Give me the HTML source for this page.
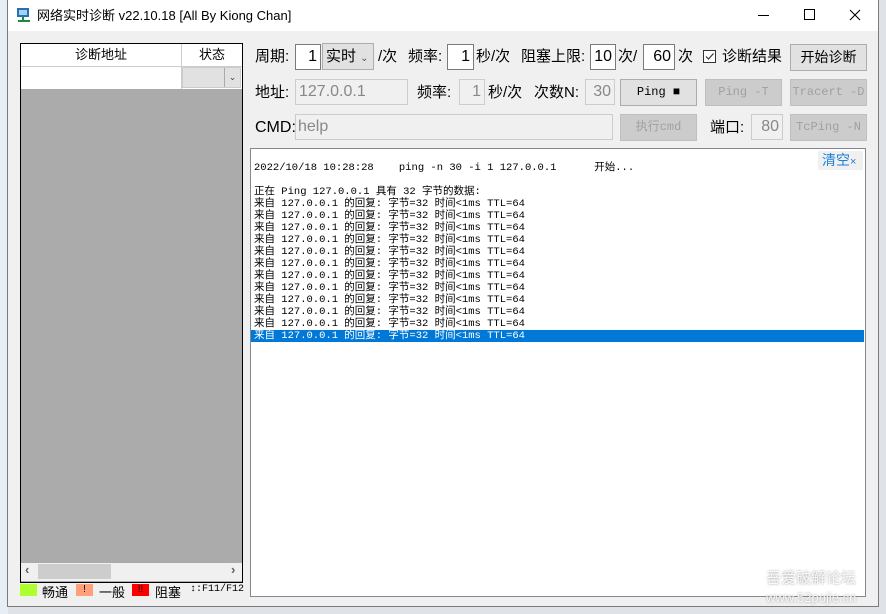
<!DOCTYPE html>
<html><head><meta charset="utf-8"><style>
*{box-sizing:border-box;margin:0;padding:0}
body{width:886px;height:614px;position:relative;overflow:hidden;background:#dfe3e8;font-family:"Liberation Sans","Microsoft YaHei","Noto Sans CJK SC",sans-serif;font-size:14px;color:#000}
.a{position:absolute}
#win{left:7px;top:0;width:872px;height:607px;background:#f0f0f0;border:1px solid #7a7a7a;border-top:none}
#title{left:8px;top:0;width:870px;height:31px;background:#fff}
.inp{position:absolute;background:#fff;border:1px solid #7a7a7a;text-align:right;padding-right:3px;font-size:16px;line-height:23px}
.dis{background:#f0f0f0;border-color:#ccc;color:#888}
.btn{position:absolute;background:#e1e1e1;border:1px solid #adadad;text-align:center;font-size:13px;line-height:24px}
.bd{background:#cccccc;border-color:#bfbfbf;color:#a0a0a0;font-family:"Liberation Mono",monospace;font-size:12px}
.lab{position:absolute;font-size:15px;line-height:20px}
#out{left:250px;top:148px;width:616px;height:449px;background:#fff;border:1px solid #828790}
pre{position:absolute;left:3px;font-family:"Liberation Mono","Noto Sans CJK SC",monospace;font-size:10.5px;line-height:12px;white-space:pre}
</style></head><body>
<div class="a" style="left:0;top:0;width:8px;height:614px;background:#e8eef5"></div>
<div class="a" id="win"></div>
<div class="a" id="title"></div>
<svg class="a" style="left:16px;top:7px" width="16" height="16"><rect x="1" y="1" width="12" height="9" fill="#2a6fb0"/><rect x="3" y="3" width="8" height="5" fill="#9fd4f5"/><rect x="6" y="10" width="2" height="3" fill="#1c8a3a"/><rect x="2" y="13" width="12" height="2" fill="#1c8a3a"/></svg>
<div class="a" style="left:37px;top:7px;font-size:13px;line-height:17px">网络实时诊断 v22.10.18 [All By Kiong Chan]</div>
<div class="a" style="left:758px;top:15px;width:11px;height:1px;background:#000"></div>
<div class="a" style="left:804px;top:9px;width:11px;height:11px;border:1px solid #000"></div>
<svg class="a" style="left:849px;top:9px" width="12" height="12"><path d="M1 1L11 11M11 1L1 11" stroke="#000" stroke-width="1.1"/></svg>

<!-- left list -->
<div class="a" style="left:20px;top:43px;width:223px;height:540px;border:1px solid #000;background:#ababab"></div>
<div class="a" style="left:21px;top:44px;width:221px;height:45px;background:#fff"></div>
<div class="a" style="left:21px;top:66px;width:221px;height:1px;background:#ccc"></div>
<div class="a" style="left:181px;top:44px;width:1px;height:45px;background:#ccc"></div>
<div class="a" style="left:21px;top:45px;width:160px;text-align:center;font-size:13px;line-height:20px">诊断地址</div>
<div class="a" style="left:182px;top:45px;width:60px;text-align:center;font-size:13px;line-height:20px">状态</div>
<div class="a" style="left:182px;top:67px;width:59px;height:21px;background:#e1e1e1;border:1px solid #ccc"></div>
<div class="a" style="left:224px;top:68px;width:16px;height:19px;border-left:1px solid #aaa;font-size:9px;text-align:center;line-height:18px;color:#444">&#8964;</div>
<div class="a" style="left:21px;top:563px;width:221px;height:18px;background:#f0f0f0"></div>
<div class="a" style="left:38px;top:564px;width:73px;height:15px;background:#cdcdcd"></div>
<div class="a" style="left:25px;top:562px;font-size:13px;color:#606060;font-weight:bold">&#8249;</div>
<div class="a" style="left:231px;top:562px;font-size:13px;color:#606060;font-weight:bold">&#8250;</div>
<div class="a" style="left:20px;top:584px;width:17px;height:12px;background:#adff2f"></div>
<div class="a" style="left:42px;top:582px;font-size:13px">畅通</div>
<div class="a" style="left:76px;top:584px;width:17px;height:12px;background:#ffa07a;font-size:10px;text-align:center;line-height:12px">!</div>
<div class="a" style="left:99px;top:582px;font-size:13px">一般</div>
<div class="a" style="left:132px;top:584px;width:17px;height:12px;background:#f00;font-size:10px;text-align:center;line-height:12px">!!</div>
<div class="a" style="left:155px;top:582px;font-size:13px">阻塞</div>
<div class="a" style="left:190px;top:584px;font-family:'Liberation Mono',monospace;font-size:10px">↕:F11/F12</div>

<!-- row1 -->
<div class="lab" style="left:255px;top:47px">周期:</div>
<div class="inp" style="left:295px;top:44px;width:26px;height:26px">1</div>
<div class="a" style="left:322px;top:43px;width:52px;height:27px;background:#e1e1e1;border:1px solid #adadad;font-size:15px;line-height:25px;padding-left:3px">实时 <span style="font-size:10px;color:#555">&#8964;</span></div>
<div class="lab" style="left:378px;top:47px">/次</div>
<div class="lab" style="left:408px;top:47px">频率:</div>
<div class="inp" style="left:447px;top:44px;width:27px;height:26px">1</div>
<div class="lab" style="left:476px;top:47px">秒/次</div>
<div class="lab" style="left:521px;top:47px">阻塞上限:</div>
<div class="inp" style="left:590px;top:44px;width:26px;height:26px">10</div>
<div class="lab" style="left:618px;top:47px">次/</div>
<div class="inp" style="left:643px;top:44px;width:32px;height:26px">60</div>
<div class="lab" style="left:678px;top:47px">次</div>
<div class="a" style="left:703px;top:50px;width:13px;height:13px;border:1px solid #333;background:#fff"></div>
<svg class="a" style="left:704px;top:51px" width="11" height="11"><path d="M2 5.5L4.5 8L9.5 2.5" stroke="#333" stroke-width="1.2" fill="none"/></svg>
<div class="lab" style="left:722px;top:47px">诊断结果</div>
<div class="btn" style="left:790px;top:44px;width:77px;height:27px;font-size:14px">开始诊断</div>

<!-- row2 -->
<div class="lab" style="left:255px;top:83px">地址:</div>
<div class="inp dis" style="left:295px;top:79px;width:113px;height:26px;text-align:left;padding-left:3px">127.0.0.1</div>
<div class="lab" style="left:417px;top:83px">频率:</div>
<div class="inp dis" style="left:459px;top:79px;width:26px;height:26px">1</div>
<div class="lab" style="left:488px;top:83px">秒/次</div>
<div class="lab" style="left:534px;top:83px">次数N:</div>
<div class="inp dis" style="left:585px;top:79px;width:30px;height:26px">30</div>
<div class="btn" style="left:620px;top:79px;width:77px;height:27px;font-family:'Liberation Mono',monospace;font-size:12px">Ping ■</div>
<div class="btn bd" style="left:705px;top:79px;width:77px;height:27px">Ping -T</div>
<div class="btn bd" style="left:790px;top:79px;width:77px;height:27px">Tracert -D</div>

<!-- row3 -->
<div class="lab" style="left:255px;top:118px;font-size:16px">CMD:</div>
<div class="inp dis" style="left:295px;top:114px;width:318px;height:26px;text-align:left;padding-left:2px">help</div>
<div class="btn bd" style="left:620px;top:114px;width:77px;height:27px">执行cmd</div>
<div class="lab" style="left:710px;top:118px">端口:</div>
<div class="inp dis" style="left:751px;top:114px;width:32px;height:26px">80</div>
<div class="btn bd" style="left:790px;top:114px;width:77px;height:27px">TcPing -N</div>

<!-- output -->
<div class="a" id="out"></div>
<div class="a" style="left:818px;top:151px;width:45px;height:19px;background:#f0f0f0;color:#1e7fd8;font-size:14px;line-height:19px;padding-left:4px">清空<span style="font-size:11px">×</span></div>
<div class="a" style="left:251px;top:160px;width:614px;height:200px">
<pre style="top:2px">2022/10/18 10:28:28    ping -n 30 -i 1 127.0.0.1      开始...</pre>
<pre style="top:26px">正在 Ping 127.0.0.1 具有 32 字节的数据:
来自 127.0.0.1 的回复: 字节=32 时间&lt;1ms TTL=64
来自 127.0.0.1 的回复: 字节=32 时间&lt;1ms TTL=64
来自 127.0.0.1 的回复: 字节=32 时间&lt;1ms TTL=64
来自 127.0.0.1 的回复: 字节=32 时间&lt;1ms TTL=64
来自 127.0.0.1 的回复: 字节=32 时间&lt;1ms TTL=64
来自 127.0.0.1 的回复: 字节=32 时间&lt;1ms TTL=64
来自 127.0.0.1 的回复: 字节=32 时间&lt;1ms TTL=64
来自 127.0.0.1 的回复: 字节=32 时间&lt;1ms TTL=64
来自 127.0.0.1 的回复: 字节=32 时间&lt;1ms TTL=64
来自 127.0.0.1 的回复: 字节=32 时间&lt;1ms TTL=64
来自 127.0.0.1 的回复: 字节=32 时间&lt;1ms TTL=64</pre>
<div class="a" style="left:0;top:170px;width:613px;height:12px;background:#0078d7"></div>
<pre style="top:170px;color:#fff">来自 127.0.0.1 的回复: 字节=32 时间&lt;1ms TTL=64</pre>
</div>
<div class="a" style="left:766px;top:567px;font-size:15px;color:rgba(255,255,255,.85);text-shadow:0 0 2px #999">吾爱破解论坛</div>
<div class="a" style="left:766px;top:590px;font-size:13px;color:rgba(255,255,255,.85);text-shadow:0 0 2px #999">www.52pojie.cn</div>
</body></html>
